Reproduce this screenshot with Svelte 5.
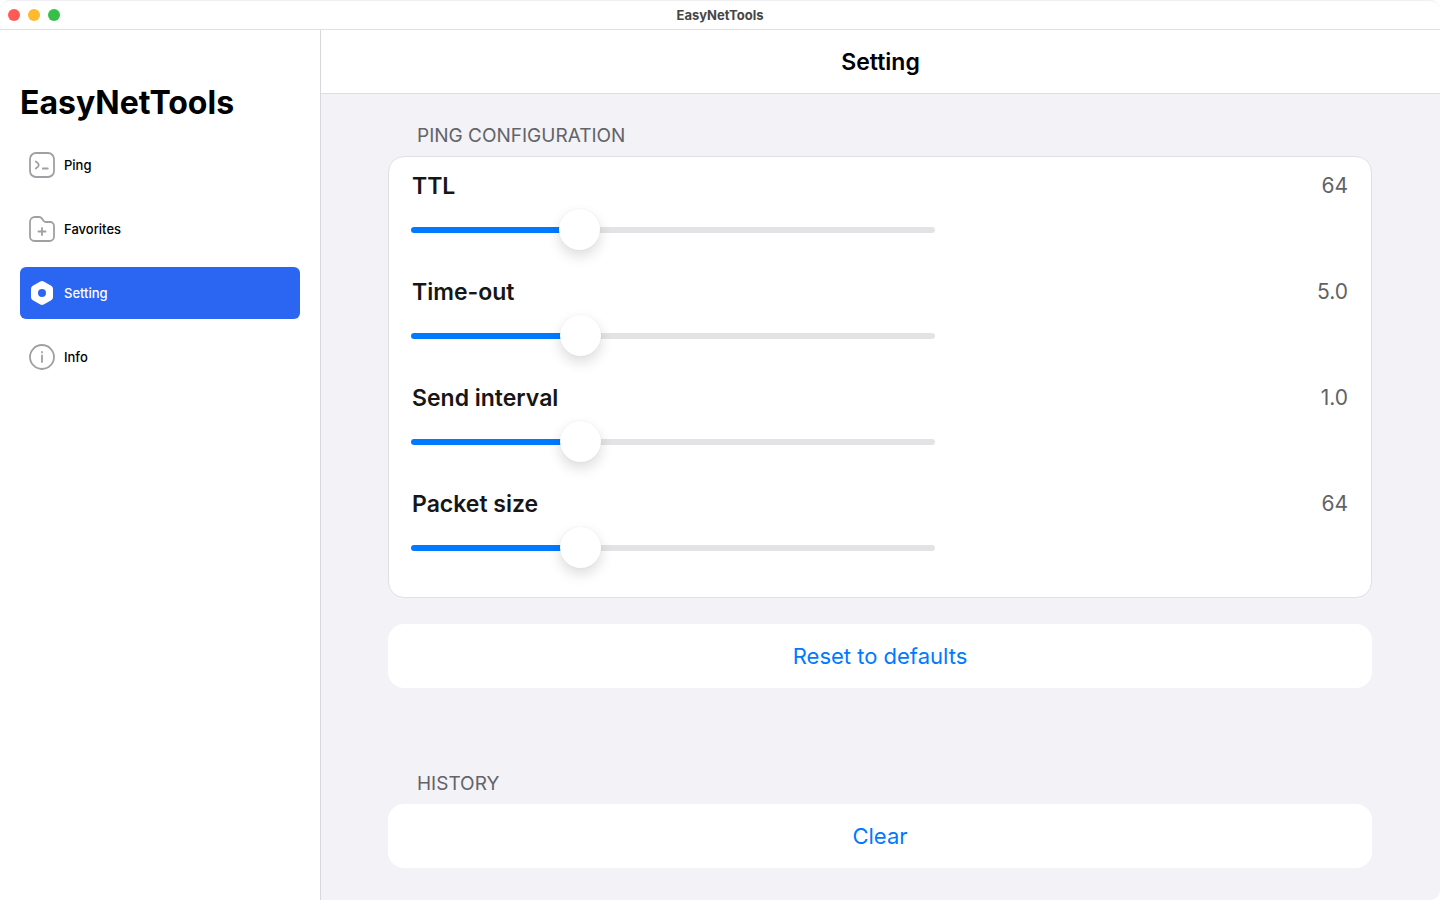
<script>
  let page = $state('Setting');

  const pages = ['Ping', 'Favorites', 'Setting', 'Info'];

  let options = $state([
    { id: 'ttl', label: 'TTL', value: 64, min: 1, max: 206, step: 1, digits: 0 },
    { id: 'timeout', label: 'Time-out', value: 5, min: 1, max: 14, step: 0.1, digits: 1 },
    { id: 'interval', label: 'Send interval', value: 1, min: 0.2, max: 2.8, step: 0.1, digits: 1 },
    { id: 'size', label: 'Packet size', value: 64, min: 8, max: 190, step: 1, digits: 0 }
  ]);

  const defaults = { ttl: 64, timeout: 5, interval: 1, size: 64 };

  const fill = (o) => ((o.value - o.min) / (o.max - o.min)) * 100;

  function reset() {
    for (const o of options) o.value = defaults[o.id];
  }
</script>

<div class="window">
  <header class="titlebar">
    <div class="lights">
      <button class="light close" aria-label="Close"></button>
      <button class="light minimize" aria-label="Minimize"></button>
      <button class="light zoom" aria-label="Zoom"></button>
    </div>
    <span class="window-title">EasyNetTools</span>
  </header>

  <div class="body">
    <aside>
      <h1>EasyNetTools</h1>
      <nav>
        {#each pages as name}
          <button class="item" class:active={page === name} onclick={() => (page = name)}>
            <svg class="icon" viewBox="0 0 28 28" aria-hidden="true">
              {#if name === 'Ping'}
                <rect x="2" y="2" width="24" height="24" rx="6" />
                <path d="M7.800 10.500c1.200.8 3 2.200 3 3.500s-1.800 2.700-3 3.500M14.800 17.500h5" />
              {:else if name === 'Favorites'}
                <path d="M2 7a5 5 0 0 1 5-5h4.200c1.300 0 2 .5 2.800 1.600l1.700 2.400c.6.8 1.200 1 2.200 1H22a4 4 0 0 1 4 4v10.500a4.500 4.500 0 0 1-4.500 4.500h-15A4.500 4.500 0 0 1 2 21.500z" />
                <path d="M14 13v7M10.500 16.500h7" />
              {:else if name === 'Setting'}
                <path
                  class="solid"
                  fill-rule="evenodd"
                  d="M12.300 2.400a3.500 3.500 0 0 1 3.400 0l7.500 4.300A3.500 3.500 0 0 1 25 9.700v8.600a3.500 3.500 0 0 1-1.800 3l-7.500 4.300a3.500 3.500 0 0 1-3.400 0l-7.500-4.300A3.500 3.500 0 0 1 3 18.300V9.700a3.500 3.500 0 0 1 1.800-3zM14 10a4 4 0 1 0 0 8 4 4 0 0 0 0-8z"
                />
              {:else}
                <circle cx="14" cy="14" r="12" />
                <path d="M14 12.500V19M14 8.800v.6" />
              {/if}
            </svg>
            {name}
          </button>
        {/each}
      </nav>
    </aside>

    <main>
      <header class="toolbar"><h2>Setting</h2></header>

      <div class="content">
        <section>
          <h3>PING CONFIGURATION</h3>
          <div class="card">
            {#each options as o (o.id)}
              <div class="option">
                <div class="row">
                  <label for={o.id}>{o.label}</label>
                  <output for={o.id}>{o.value.toFixed(o.digits)}</output>
                </div>
                <input
                  id={o.id}
                  type="range"
                  min={o.min}
                  max={o.max}
                  step={o.step}
                  bind:value={o.value}
                  style:--fill="{fill(o)}%"
                />
              </div>
            {/each}
          </div>
          <button class="action" onclick={reset}>Reset to defaults</button>
        </section>

        <section>
          <h3>HISTORY</h3>
          <button class="action">Clear</button>
        </section>
      </div>
    </main>
  </div>
</div>

<style>
  :global(body) {
    background: #fff;
  }
  .window {
    box-sizing: border-box;
    min-height: 100vh;
    display: flex;
    flex-direction: column;
    font-family: Inter, 'Liberation Sans', sans-serif;
    color: #000;
    border-top: 1px solid #efeff4;
    border-radius: 10px;
    overflow: hidden;
  }
  button {
    font-family: inherit;
    border: none;
    padding: 0;
    cursor: pointer;
  }
  h1,
  h2,
  h3 {
    margin: 0;
  }

  .titlebar {
    display: grid;
    grid-template-columns: 1fr auto 1fr;
    align-items: center;
    height: 28px;
    border-bottom: 1px solid #e0e0e2;
  }
  .lights {
    display: flex;
    gap: 8px;
    padding-left: 8px;
  }
  .light {
    width: 12px;
    height: 12px;
    border-radius: 50%;
  }
  .close {
    background: #ff5b54;
  }
  .minimize {
    background: #ffb92c;
  }
  .zoom {
    background: #35c148;
  }
  .window-title {
    font-size: 13px;
    line-height: 16px;
    font-weight: 700;
    color: #464646;
  }

  .body {
    flex: 1;
    display: flex;
  }
  aside {
    box-sizing: border-box;
    flex: 0 0 321px;
    padding: 52px 20px 20px;
    border-right: 1px solid #d8d8dc;
    background: #fff;
  }
  h1 {
    font-size: 32px;
    line-height: 41px;
    font-weight: 700;
    margin-bottom: 16px;
  }
  nav {
    display: flex;
    flex-direction: column;
    gap: 12px;
  }
  .item {
    display: flex;
    align-items: center;
    gap: 8px;
    height: 52px;
    padding: 0 8px;
    border-radius: 6px;
    background: none;
    color: #000;
    font-size: 13px;
    line-height: 16px;
    font-weight: 500;
  }
  .item.active {
    background: #2b66f3;
    color: #fff;
  }
  .icon {
    width: 28px;
    height: 28px;
    fill: none;
    stroke: #a0a0a4;
    stroke-width: 1.8;
    stroke-linecap: round;
    stroke-linejoin: round;
  }
  .solid {
    fill: #fff;
    stroke: none;
  }
  .item:not(.active) .solid {
    fill: #a0a0a4;
  }

  main {
    flex: 1;
    min-width: 0;
    background: #f2f2f7;
  }
  .toolbar {
    display: flex;
    align-items: center;
    justify-content: center;
    height: 63px;
    background: #fff;
    border-bottom: 1px solid #dedee2;
  }
  h2 {
    font-size: 23px;
    line-height: 28px;
    font-weight: 600;
  }
  .content {
    display: flex;
    flex-direction: column;
    gap: 80px;
    padding: 26px 68px 32px 67px;
  }
  h3 {
    padding: 1px 0 0 29px;
    margin-bottom: 6px;
    font-size: 19px;
    line-height: 29px;
    font-weight: 400;
    color: #636368;
  }
  .card {
    border: 1px solid #e0e0e4;
    border-radius: 16px;
    background: #fff;
    padding: 12px 23px 4px;
    margin-bottom: 26px;
  }
  .option {
    height: 106px;
  }
  .row {
    display: flex;
    justify-content: space-between;
    line-height: 34px;
  }
  label {
    font-size: 23px;
    font-weight: 600;
    color: #161616;
  }
  output {
    font-size: 21px;
    color: #626266;
  }
  input {
    appearance: none;
    display: block;
    width: 56%;
    height: 42px;
    margin: 6px 0 0 -1px;
    background: none;
    cursor: pointer;
  }
  input::-webkit-slider-runnable-track {
    height: 6px;
    border-radius: 3px;
    background: linear-gradient(90deg, #007aff var(--fill), #e3e3e5 var(--fill));
  }
  input::-webkit-slider-thumb {
    appearance: none;
    width: 41px;
    height: 41px;
    margin-top: -18px;
    border-radius: 50%;
    background: #fff;
    box-shadow:
      0 0 2px rgba(0, 0, 0, 0.06),
      0 6px 14px rgba(0, 0, 0, 0.14);
  }
  .action {
    display: block;
    width: 100%;
    height: 64px;
    border-radius: 16px;
    background: #fff;
    color: #007aff;
    font-size: 22px;
    line-height: 28px;
  }
</style>
